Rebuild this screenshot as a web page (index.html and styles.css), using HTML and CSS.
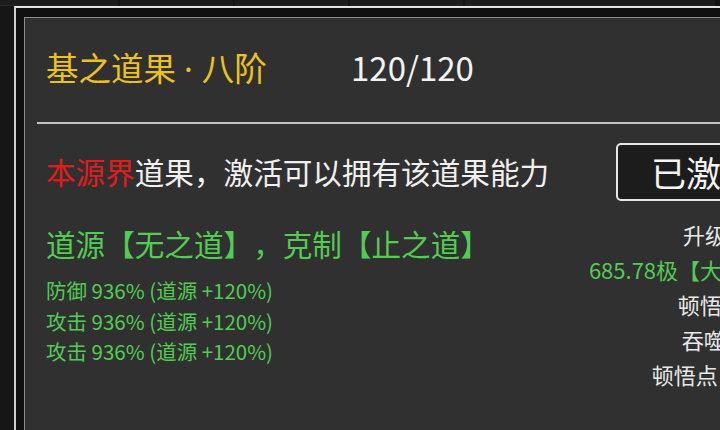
FILE: index.html
```html
<!DOCTYPE html>
<html lang="zh-CN">
<head>
<meta charset="utf-8">
<title>道果</title>
<link rel="stylesheet" href="styles.css">
</head>
<body>
<div class="tabs">
  <div class="tab tab-first"></div>
  <div class="tab"></div>
  <div class="tab"></div>
  <div class="tab"></div>
  <div class="tab tab-last"></div>
</div>
<div class="frame">
  <div class="panel">
    <div class="header">
      <span class="title">基之道果<span class="dot">·</span>八阶</span><span class="count">120/120</span>
    </div>
    <div class="divider"></div>
    <div class="desc-row">
      <div class="desc"><span class="red">本源界</span>道果，激活可以拥有该道果能力</div>
      <div class="btn">已激活</div>
    </div>
    <div class="lower">
      <div class="left-col">
        <div class="source">道源【无之道】，克制【止之道】</div>
        <div class="stats">
          <div class="stat">防御 936% (道源 +120%)</div>
          <div class="stat">攻击 936% (道源 +120%)</div>
          <div class="stat">攻击 936% (道源 +120%)</div>
        </div>
      </div>
      <div class="right-col">
        <div class="info">升级所需道韵</div>
        <div class="info green">685.78极【大道本源】（已满足）</div>
        <div class="info">顿悟几率：3%</div>
        <div class="info">吞噬次数：12</div>
        <div class="info">顿悟点：1560/2000</div>
      </div>
    </div>
  </div>
</div>
</body>
</html>
```
FILE: styles.css
```css
html, body {
  margin: 0;
  padding: 0;
  width: 720px;
  height: 430px;
  overflow: hidden;
  background: #161616;
  font-family: "Noto Sans CJK SC", "Noto Sans", sans-serif;
  text-spacing-trim: space-all;
}

.tabs {
  display: flex;
  height: 6px;
  background: #141414;
}

.tab {
  width: 113px;
  margin-right: 2px;
  background: #1c1c1c;
  border-bottom: 1px solid #262626;
  box-sizing: border-box;
}

.tab-first {
  width: 118px;
}

.tab-last {
  width: 250px;
}

.frame {
  margin-left: 14px;
  width: 900px;
  height: 430px;
  border-top: 2px solid #e4e4e4;
  border-left: 2px solid #d0d0d0;
  background: #101010;
  padding: 9px 0 0 8px;
  box-sizing: border-box;
}

.panel {
  height: 420px;
  background: #303030;
  border-top: 1px solid #8c8c8c;
  border-left: 1px solid #8c8c8c;
  box-sizing: border-box;
  padding-left: 21px;
}

.header {
  height: 104px;
  padding-top: 29px;
  box-sizing: border-box;
  line-height: 40px;
  white-space: nowrap;
}

.title {
  display: inline-block;
  width: 305px;
  font-size: 32.5px;
  color: #ecc21e;
}

.dot {
  font-family: "Noto Sans", sans-serif;
  padding: 0 9px 0 8px;
}

.count {
  font-size: 33px;
  color: #f2f2f2;
}

.divider {
  height: 2px;
  margin-left: -9px;
  background: #c4c4c4;
}

.desc-row {
  display: flex;
  align-items: center;
  margin-top: 19px;
  height: 58px;
}

.desc {
  width: 570px;
  font-size: 29.6px;
  line-height: 36px;
  color: #f0f0f0;
  white-space: nowrap;
}

.red {
  color: #e21c1c;
}

.btn {
  flex: none;
  height: 58px;
  width: 178px;
  box-sizing: border-box;
  border: 2px solid #e6e6e6;
  border-radius: 5px;
  background: #1c1c1c;
  color: #f4f4f4;
  font-size: 35px;
  line-height: 54px;
  padding-left: 33px;
}

.lower {
  display: grid;
  grid-template-columns: 533px 340px;
  align-items: start;
}

.left-col {
  margin-top: 25px;
}

.source {
  font-size: 29.6px;
  line-height: 36px;
  color: #52cc52;
  white-space: nowrap;
}

.stats {
  margin-top: 13px;
}

.stat {
  font-size: 20.5px;
  line-height: 30.5px;
  color: #52cc52;
  white-space: nowrap;
}

.right-col {
  margin-top: 16px;
  text-align: center;
  text-spacing-trim: normal;
}

.info {
  font-size: 22px;
  line-height: 35px;
  color: #e8e8e8;
  white-space: nowrap;
}

.green {
  color: #52cc52;
}
```
